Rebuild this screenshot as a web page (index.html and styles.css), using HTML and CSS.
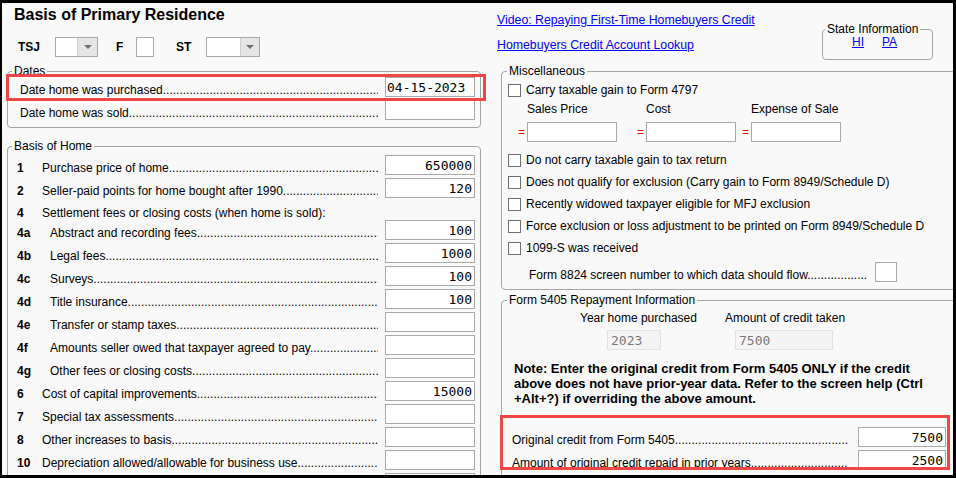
FILE: index.html
```html
<!DOCTYPE html>
<html lang="en">
<head>
<meta charset="utf-8">
<title>Basis of Primary Residence</title>
<link rel="stylesheet" href="styles.css">
</head>
<body>
<div class="frame">
  <div class="left">
    <h1 class="title">Basis of Primary Residence</h1>
    <div class="filer-row">
      <span class="filer-lbl tsj">TSJ</span>
      <span class="combo combo-tsj"><span class="combo-val"></span><span class="combo-btn"></span></span>
      <span class="filer-lbl f">F</span>
      <span class="box-f"></span>
      <span class="filer-lbl st">ST</span>
      <span class="combo combo-st"><span class="combo-val"></span><span class="combo-btn"></span></span>
    </div>

    <fieldset class="group dates">
      <legend>Dates</legend>
      <div class="body">
        <div class="row"><span class="lbl">Date home was purchased</span><span class="field date">04-15-2023</span></div>
        <div class="row"><span class="lbl">Date home was sold</span><span class="field"></span></div>
      </div>
    </fieldset>

    <fieldset class="group basis">
      <legend>Basis of Home</legend>
      <div class="body">
        <div class="row"><span class="num">1</span><span class="lbl">Purchase price of home</span><span class="field">650000</span></div>
        <div class="row"><span class="num">2</span><span class="lbl">Seller-paid points for home bought after 1990</span><span class="field">120</span></div>
        <div class="row text-only"><span class="num">4</span><span class="lbl plain">Settlement fees or closing costs (when home is sold):</span></div>
        <div class="row sub"><span class="num">4a</span><span class="lbl">Abstract and recording fees</span><span class="field">100</span></div>
        <div class="row sub"><span class="num">4b</span><span class="lbl">Legal fees</span><span class="field">1000</span></div>
        <div class="row sub"><span class="num">4c</span><span class="lbl">Surveys</span><span class="field">100</span></div>
        <div class="row sub"><span class="num">4d</span><span class="lbl">Title insurance</span><span class="field">100</span></div>
        <div class="row sub"><span class="num">4e</span><span class="lbl">Transfer or stamp taxes</span><span class="field"></span></div>
        <div class="row sub"><span class="num">4f</span><span class="lbl">Amounts seller owed that taxpayer agreed to pay</span><span class="field"></span></div>
        <div class="row sub"><span class="num">4g</span><span class="lbl">Other fees or closing costs</span><span class="field"></span></div>
        <div class="row"><span class="num">6</span><span class="lbl">Cost of capital improvements</span><span class="field">15000</span></div>
        <div class="row"><span class="num">7</span><span class="lbl">Special tax assessments</span><span class="field"></span></div>
        <div class="row"><span class="num">8</span><span class="lbl">Other increases to basis</span><span class="field"></span></div>
        <div class="row"><span class="num">10</span><span class="lbl">Depreciation allowed/allowable for business use</span><span class="field"></span></div>
        <div class="row"><span class="num"></span><span class="lbl plain"></span><span class="field"></span></div>
      </div>
    </fieldset>
  </div>

  <div class="right">
    <div class="head">
      <div class="links">
        <a href="#">Video: Repaying First-Time Homebuyers Credit</a>
        <a href="#">Homebuyers Credit Account Lookup</a>
      </div>
      <fieldset class="group state">
        <legend>State Information</legend>
        <div class="body state-links"><a href="#">HI</a><a href="#">PA</a></div>
      </fieldset>
    </div>

    <fieldset class="group misc">
      <legend>Miscellaneous</legend>
      <div class="body">
        <div class="chk-row"><span class="chk"></span>Carry taxable gain to Form 4797</div>
        <div class="calc">
          <div class="calc-col c1"><span class="calc-lbl">Sales Price</span><span class="calc-line"><span class="eq">=</span><span class="field wide"></span></span></div>
          <div class="calc-col c2"><span class="calc-lbl">Cost</span><span class="calc-line"><span class="eq">=</span><span class="field wide"></span></span></div>
          <div class="calc-col c3"><span class="calc-lbl">Expense of Sale</span><span class="calc-line"><span class="eq">=</span><span class="field wide"></span></span></div>
        </div>
        <div class="chk-list">
          <div class="chk-row"><span class="chk"></span>Do not carry taxable gain to tax return</div>
          <div class="chk-row"><span class="chk"></span>Does not qualify for exclusion (Carry gain to Form 8949/Schedule D)</div>
          <div class="chk-row"><span class="chk"></span>Recently widowed taxpayer eligible for MFJ exclusion</div>
          <div class="chk-row"><span class="chk"></span>Force exclusion or loss adjustment to be printed on Form 8949/Schedule D</div>
          <div class="chk-row"><span class="chk"></span>1099-S was received</div>
        </div>
        <div class="row flow-row"><span class="lbl">Form 8824 screen number to which data should flow</span><span class="field tiny"></span></div>
      </div>
    </fieldset>

    <fieldset class="group f5405">
      <legend>Form 5405 Repayment Information</legend>
      <div class="body">
        <div class="amounts">
          <div class="amt-col a"><span class="amt-lbl">Year home purchased</span><span class="field dis year">2023</span></div>
          <div class="amt-col b"><span class="amt-lbl">Amount of credit taken</span><span class="field dis taken">7500</span></div>
        </div>
        <p class="note">Note: Enter the original credit from Form 5405 ONLY if the credit<br>above does not have prior-year data. Refer to the screen help (Ctrl<br>+Alt+?) if overriding the above amount.</p>
        <div class="credits">
          <div class="row credit-row"><span class="lbl">Original credit from Form 5405</span><span class="field cr">7500</span></div>
          <div class="row credit-row"><span class="lbl">Amount of original credit repaid in prior years</span><span class="field cr">2500</span></div>
        </div>
      </div>
    </fieldset>
  </div>

  <div class="hl hl-date"></div>
  <div class="hl hl-credit"></div>
</div>
</body>
</html>
```

FILE: styles.css
```css
* { box-sizing: border-box; }
html, body { margin: 0; padding: 0; background: #000; }
body {
  font-family: "Liberation Sans", Arial, sans-serif;
  font-size: 12px;
  color: #000;
}
.frame {
  position: relative;
  width: 956px;
  height: 478px;
  border-style: solid;
  border-color: #000;
  border-width: 3px 3px 3px 2px;
  background: #f9f9f9;
  overflow: hidden;
  display: grid;
  grid-template-columns: 488px 1fr;
  align-items: start;
}
.left, .right { min-width: 0; }

.title {
  margin: 0;
  padding: 2px 0 0 12px;
  font-size: 16px;
  line-height: 20px;
  font-weight: bold;
}

.filer-row {
  display: flex;
  align-items: center;
  height: 20px;
  margin-top: 12px;
  padding-left: 16px;
  font-weight: bold;
}
.filer-lbl.tsj { width: 37px; }
.filer-lbl.f { margin-left: 18px; width: 20px; }
.filer-lbl.st { margin-left: 22px; width: 30px; }
.combo {
  display: flex;
  height: 20px;
  border: 1px solid #a9a9a9;
  background: #fff;
}
.combo-tsj { width: 43px; }
.combo-tsj .combo-val { width: 21px; }
.combo-st { width: 54px; }
.combo-st .combo-val { width: 33px; }
.combo-btn {
  flex: 1;
  background: #e5e5e5;
  border-left: 1px solid #cfcfcf;
  display: flex;
  align-items: center;
  justify-content: center;
}
.combo-btn::after {
  content: "";
  width: 0;
  height: 0;
  border-left: 4px solid transparent;
  border-right: 4px solid transparent;
  border-top: 4px solid #707070;
}
.box-f {
  width: 18px;
  height: 20px;
  border: 1px solid #a9a9a9;
  background: #fff;
}

/* group boxes */
.group {
  margin: 0;
  padding: 0;
  border: 1px solid #a6a6a6;
  border-radius: 4px;
  min-width: 0;
}
.group legend {
  padding: 0 2px;
  margin-left: 4px;
  font-size: 12px;
  line-height: 12px;
}

.row {
  display: flex;
  align-items: center;
  height: 20px;
  margin-bottom: 3px;
}
.row:last-child { margin-bottom: 0; }
.lbl {
  flex: 1;
  min-width: 0;
  overflow: hidden;
  white-space: nowrap;
  line-height: 14px;
  padding-top: 5px;
  margin-right: 7px;
}
.lbl::after {
  content: "..............................................................................................................................................";
}
.lbl.plain::after { content: none; }
.num {
  flex: none;
  width: 25px;
  font-weight: bold;
  line-height: 14px;
  padding-top: 5px;
}
.row.sub .num { width: 33px; }
.row.text-only {
  height: 16px;
  align-items: flex-start;
}
.row.text-only .lbl { padding-top: 5px; }

.field {
  flex: none;
  width: 90px;
  height: 20px;
  border: 1px solid #aaaaaa;
  background: #fff;
  font-family: "DejaVu Sans Mono", monospace;
  font-size: 13px;
  display: flex;
  align-items: center;
  justify-content: flex-end;
  padding: 0 2px 0 1px;
  white-space: nowrap;
}
.field.date { justify-content: flex-start; }

.dates {
  margin: 8px 9px 0 5px;
}
.dates .body { padding: 0 5px 7px 12px; }
.basis {
  margin: 12px 9px 0 5px;
}
.basis .body { padding: 3px 5px 0 9px; }

/* right column */
.head {
  display: flex;
  height: 62px;
}
.links {
  display: flex;
  flex-direction: column;
  align-items: flex-start;
  gap: 11px;
  padding: 10px 0 0 7px;
  line-height: 14px;
  font-size: 12.3px;
}
a { color: #0000ff; text-decoration: underline; }
.state {
  flex: none;
  align-self: flex-start;
  width: 111px;
  margin: 20px 20px 0 auto;
}
.state legend { margin-left: 2px; }
.state-links {
  display: flex;
  gap: 18px;
  padding: 0 0 10px 29px;
  line-height: 14px;
}

.misc { margin: 0 -30px 0 11px; }
.misc legend, .f5405 legend { margin-left: 5px; }
.misc .body { padding: 2px 0 7px 6px; }
.chk-row {
  display: flex;
  align-items: center;
  height: 22px;
  white-space: nowrap;
}
.chk {
  flex: none;
  width: 13px;
  height: 13px;
  border: 1px solid #707070;
  background: #fff;
  margin-right: 5px;
}
.calc {
  display: flex;
  margin-top: 1px;
  padding-left: 10px;
}
.calc-col { display: flex; flex-direction: column; }
.calc-col.c2 { margin-left: 20px; }
.calc-col.c3 { margin-left: 6px; }
.calc-lbl {
  height: 14px;
  line-height: 14px;
  padding-left: 9px;
}
.calc-line {
  display: flex;
  align-items: center;
  margin-top: 6px;
}
.eq {
  width: 9px;
  color: #e01010;
}
.chk-list { margin-top: 7px; }
.flow-row {
  margin-top: 3px;
  padding-left: 21px;
  width: 389px;
}
.field.tiny { width: 22px; }

.f5405 { margin: 4px -30px 0 11px; }
.f5405 .body { padding: 5px 0 40px 0; }
.amounts { display: flex; padding-left: 78px; }
.amt-col { display: flex; flex-direction: column; align-items: flex-start; }
.amt-col.a { width: 145px; }
.amt-lbl { line-height: 14px; }
.field.dis {
  margin-top: 5px;
  background: #f4f4f4;
  border-color: #e3e3e3;
  color: #7a7a7a;
  justify-content: flex-start;
  padding-left: 3px;
}
.field.year { width: 54px; margin-left: 27px; }
.field.taken { width: 98px; margin-left: 10px; }
.note {
  margin: 11px 0 0 0;
  padding-left: 12px;
  font-size: 13px;
  line-height: 15px;
  font-weight: bold;
  white-space: nowrap;
}
.credits { margin-top: 21px; padding-left: 10px; }
.credit-row { width: 434px; }
.credit-row .lbl { margin-right: 10px; }
.field.cr { width: 88px; }

/* highlight overlays */
.hl {
  position: absolute;
  border: 3px solid #f04646;
  pointer-events: none;
}
.hl-date { left: 4px; top: 71px; width: 480px; height: 27px; }
.hl-credit { left: 498px; top: 412px; width: 450px; height: 55px; }
```
